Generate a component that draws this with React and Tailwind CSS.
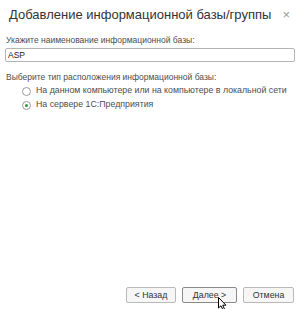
import React from "react";

const Radio = ({ checked, label }) => (
	<div className="flex items-center h-[14px]">
		<span className="w-[9px] h-[9px] rounded-full border border-[#9a9a9a] bg-white flex items-center justify-center">
			{checked && <span className="w-[3px] h-[3px] rounded-full bg-[#2f9a3a]" />}
		</span>
		<span className="ml-[5px] whitespace-nowrap text-[8.8px]">{label}</span>
	</div>
);

const Button = ({ children, focused, className = "" }) => (
	<button
		className={
			"h-[16px] rounded-[2px] bg-[#f6f6f6] text-[8.8px] text-[#333] leading-none flex items-center justify-center border " +
			(focused ? "border-[#8a8a8a] " : "border-[#b9b9b9] ") +
			className
		}
	>
		{children}
	</button>
);

export default function App() {
	return (
		<div className="w-[300px] h-[309px] bg-white flex flex-col font-['Liberation_Sans',Arial,sans-serif] text-[#4d4d4d] text-[8.5px] overflow-hidden">
			<div className="flex items-center h-[28px] pl-[9px] pr-[10px]">
				<h1 className="text-[13px] text-[#333] leading-none flex-1 whitespace-nowrap">Добавление информационной базы/группы</h1>
				<span className="text-[13px] text-[#9a9a9a] leading-none">×</span>
			</div>
			<div className="px-[5px] pt-[6px]">
				<div className="pl-[1px] leading-[13px] whitespace-nowrap">Укажите наименование информационной базы:</div>
				<div className="mt-[1px] h-[14px] border border-[#b4b4b4] rounded-[2px] flex items-center pl-[2px] text-[#222]">ASP</div>
				<div className="mt-[9px] pl-[1px] leading-[13px] whitespace-nowrap">Выберите тип расположения информационной базы:</div>
				<div className="pl-[17px] flex flex-col">
					<Radio label="На данном компьютере или на компьютере в локальной сети" />
					<Radio checked label="На сервере 1С:Предприятия" />
				</div>
			</div>
			<div className="flex-1" />
			<div className="flex justify-end gap-[6px] pr-[6px] pb-[6px] relative">
				<Button className="w-[50px]">&lt; Назад</Button>
				<Button focused className="w-[55px]">Далее &gt;</Button>
				<Button className="w-[51px]">Отмена</Button>
				<svg className="absolute left-[218px] top-[10px]" width="10" height="15" viewBox="0 0 10 15">
					<path d="M0.5 0.5 L0.5 11 L3 8.8 L5 13 L6.6 12.3 L4.7 8.2 L8 8.2 Z" fill="white" stroke="black" strokeWidth="1" strokeLinejoin="round" />
				</svg>
			</div>
		</div>
	);
}
